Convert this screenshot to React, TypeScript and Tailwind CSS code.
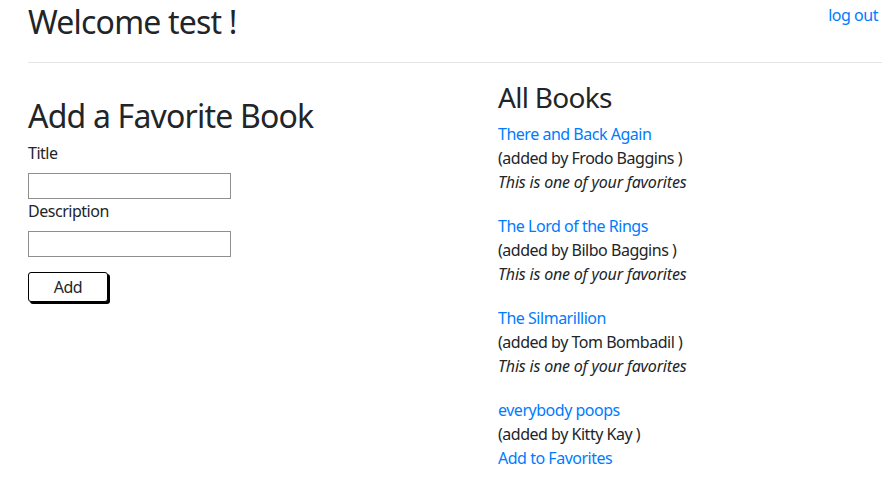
import React, { useState } from 'react';

type Book = { id: number; title: string; addedBy: string; favorite: boolean };

const initialBooks: Book[] = [
    { id: 1, title: 'There and Back Again', addedBy: 'Frodo Baggins', favorite: true },
    { id: 2, title: 'The Lord of the Rings', addedBy: 'Bilbo Baggins', favorite: true },
    { id: 3, title: 'The Silmarillion', addedBy: 'Tom Bombadil', favorite: true },
    { id: 4, title: 'everybody poops', addedBy: 'Kitty Kay', favorite: false },
];

const App: React.FC = () => {
    const [books, setBooks] = useState<Book[]>(initialBooks);
    const [title, setTitle] = useState('');
    const [description, setDescription] = useState('');

    const addFavorite = (id: number) => {
        setBooks(prev => prev.map(b => (b.id === id ? { ...b, favorite: true } : b)));
    };

    return (
        <div className="min-h-screen bg-white pl-[28px] text-[16px] leading-[24px] tracking-[-0.03em] text-[#212529] font-['Noto_Sans',sans-serif]">
            <div className="flex items-start justify-between pt-[3px]">
                <h1 className="mb-[5px] text-[32px] leading-[38.4px] font-normal tracking-[-0.025em]">Welcome test !</h1>
                <a href="#" className="pr-[4px] text-[#007bff]">log out</a>
            </div>
            <hr className="my-4 border-t border-black/10" />
            <div className="flex">
                <div className="w-[470px] pt-[18px]">
                    <h2 className="mb-[5px] text-[32px] leading-[38.4px] font-normal tracking-[-0.025em]">Add a Favorite Book</h2>
                    <form onSubmit={e => e.preventDefault()}>
                        <label className="block mb-2 mt-[2px]">Title</label>
                        <input
                            value={title}
                            onChange={e => setTitle(e.target.value)}
                            className="block h-[26px] w-[203px] border border-[#8f8f8f] outline-none"
                        />
                        <label className="block mb-2 mt-0">Description</label>
                        <input
                            value={description}
                            onChange={e => setDescription(e.target.value)}
                            className="block h-[26px] w-[203px] border border-[#8f8f8f] outline-none"
                        />
                        <button
                            type="submit"
                            className="mt-[15px] h-[30px] w-[80px] rounded-[3px] border border-black bg-white shadow-[2px_2px_0_#000]"
                        >
                            Add
                        </button>
                    </form>
                </div>
                <div>
                    <h3 className="mb-[7px] pt-[2px] text-[28px] leading-[33.6px] font-normal tracking-[-0.025em]">All Books</h3>
                    {books.map(book => (
                        <div key={book.id} className="mb-[20px]">
                            <a href="#" className="block text-[#007bff]">{book.title}</a>
                            <div>(added by {book.addedBy} )</div>
                            {book.favorite ? (
                                <div className="italic tracking-[-0.012em]">This is one of your favorites</div>
                            ) : (
                                <a href="#" onClick={() => addFavorite(book.id)} className="block text-[#007bff]">Add to Favorites</a>
                            )}
                        </div>
                    ))}
                </div>
            </div>
        </div>
    );
};

export default App;
